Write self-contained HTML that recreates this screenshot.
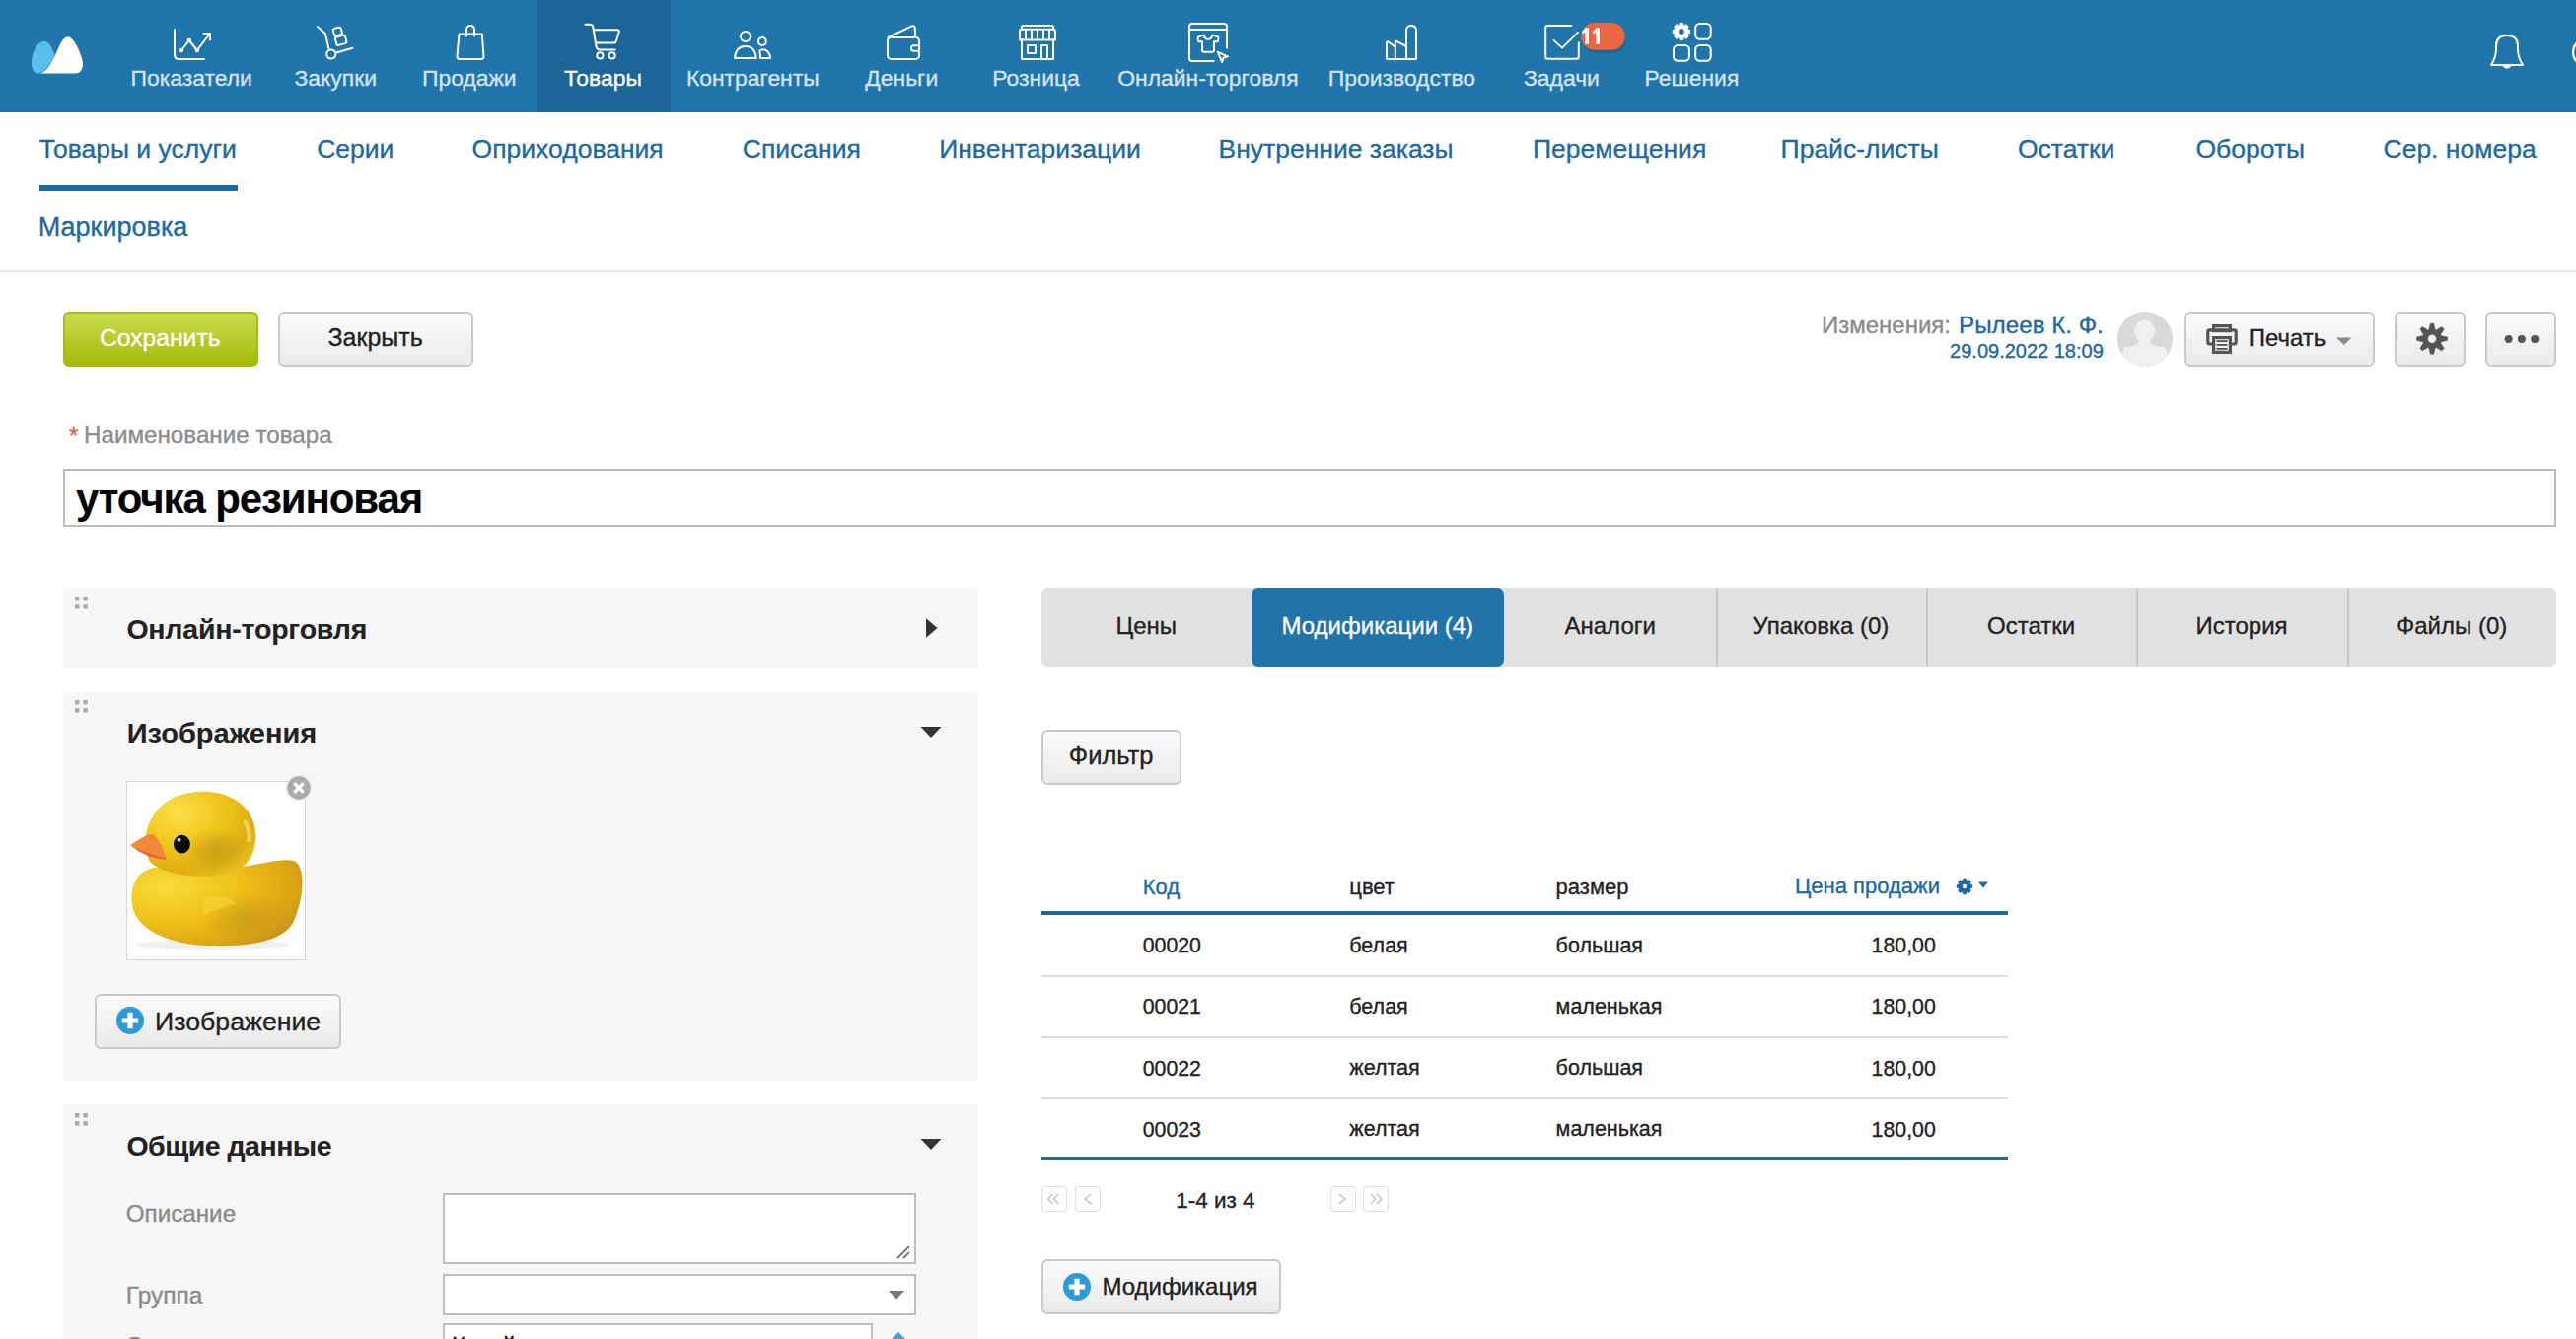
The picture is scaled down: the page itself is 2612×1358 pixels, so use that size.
<!DOCTYPE html>
<html><head><meta charset="utf-8"><style>
html,body{margin:0;padding:0;}
body{width:2612px;height:1358px;overflow:hidden;position:relative;background:#fff;font-family:"Liberation Sans",sans-serif;}
.t{position:absolute;white-space:nowrap;line-height:1;font-family:"Liberation Sans",sans-serif;-webkit-text-stroke:0.35px currentColor;}
.r{position:absolute;}
</style></head><body>
<div class="r" style="left:0px;top:0px;width:2612px;height:114px;background:#2075aa;"></div>
<div class="r" style="left:544px;top:0px;width:136px;height:114px;background:#1c6697;border-radius:3px 3px 0 0;"></div>
<div class="t" style="left:132.6px;top:67.6px;font-size:22.9px;color:#d3e3ef;">Показатели</div>
<div class="t" style="left:298.5px;top:67.6px;font-size:22.9px;color:#d3e3ef;">Закупки</div>
<div class="t" style="left:428.0px;top:67.6px;font-size:22.9px;color:#d3e3ef;">Продажи</div>
<div class="t" style="left:572.1px;top:67.6px;font-size:22.9px;color:#ffffff;">Товары</div>
<div class="t" style="left:695.9px;top:67.6px;font-size:22.9px;color:#d3e3ef;">Контрагенты</div>
<div class="t" style="left:877.3px;top:67.6px;font-size:22.9px;color:#d3e3ef;">Деньги</div>
<div class="t" style="left:1006.3px;top:67.6px;font-size:22.9px;color:#d3e3ef;">Розница</div>
<div class="t" style="left:1133.3px;top:67.6px;font-size:22.9px;color:#d3e3ef;">Онлайн-торговля</div>
<div class="t" style="left:1346.8px;top:67.6px;font-size:22.9px;color:#d3e3ef;">Производство</div>
<div class="t" style="left:1545.0px;top:67.6px;font-size:22.9px;color:#d3e3ef;">Задачи</div>
<div class="t" style="left:1667.4px;top:67.6px;font-size:22.9px;color:#d3e3ef;">Решения</div>
<svg class="r" style="left:0;top:0" width="2612" height="114" viewBox="0 0 2612 114">
<path d="M39 74.7 C33 74.2 31.6 68 32 62 C32.6 53 38 41.8 44.8 41.8 C50 41.8 53 49 55.6 56 C52 64 47 72.5 39 74.7Z" fill="#5bbdec"/>
<path d="M40.5 74.6 C48 72.5 52 64 56 56 C60 47 63.5 37.2 68.7 37.2 C74 37.2 80 49 83 59 C85.5 68 83 74.6 76 74.6Z" fill="#fff"/>
<g stroke="#fff" stroke-width="2" fill="none" stroke-linecap="round" stroke-linejoin="round">
<path d="M177 30 V55.5 Q177 60 181.5 60 H207"/>
<path d="M184 51 L191.8 41 L199.9 51 L212.5 34.5"/>
<path d="M206.5 34 H213 V40.5"/>
</g>
<g fill="#fff"><circle cx="184" cy="51" r="2.2"/><circle cx="191.8" cy="41" r="2.2"/><circle cx="199.9" cy="51" r="2.2"/></g>
<g stroke="#fff" stroke-width="2" fill="none" stroke-linecap="round" stroke-linejoin="round">
<path d="M322 27 L329.8 33.9 L333.6 50"/>
<circle cx="335.8" cy="55" r="4.6"/>
<path d="M341 53.5 L357.5 48.8"/>
<rect x="337.4" y="29.4" width="8.2" height="7.6" rx="2" transform="rotate(-15 337.4 29.4)"/>
<rect x="339.5" y="38" width="10.4" height="8.6" rx="2" transform="rotate(-15 339.5 38)"/>
</g>
<g stroke="#fff" stroke-width="2" fill="none" stroke-linecap="round" stroke-linejoin="round">
<path d="M465.5 34.5 H488.8 L490.5 57 Q490.7 60 487.7 60 H466.3 Q463.3 60 463.5 57Z"/>
<path d="M473 36.5 V30 Q473 26 477 26 Q481 26 481 30 V36.5"/>
</g>
<g stroke="#fff" stroke-width="2" fill="none" stroke-linecap="round" stroke-linejoin="round">
<path d="M593.5 24.8 H598.5 Q600.8 24.8 601.3 27.5 L604.7 47.8 Q605.3 50.4 608 50.4 H623.8"/>
<path d="M602.4 30.2 H626 Q628.3 30.2 627.7 32.5 L624.6 42.5 Q624.1 43.6 622.8 43.6 H604.5"/>
<circle cx="608.4" cy="56.4" r="3.1"/><circle cx="620.6" cy="56.4" r="3.1"/>
</g>
<g stroke="#fff" stroke-width="2" fill="none" stroke-linecap="round" stroke-linejoin="round">
<circle cx="755.9" cy="36.9" r="5"/>
<path d="M745 59 Q746 47 755.9 47 Q765.8 47 766.8 59Z"/>
<circle cx="772.9" cy="42" r="3.9"/>
<path d="M770.2 51.6 Q772 50.2 773.5 50.2 Q780 50.2 781.2 59 H771 Q771 55 770.2 51.6Z"/>
</g>
<g stroke="#fff" stroke-width="2" fill="none" stroke-linecap="round" stroke-linejoin="round">
<rect x="900" y="38" width="32" height="21.9" rx="3.5"/>
<path d="M900.5 38 L924 26.6 Q927.8 25.3 927.9 29.5 V38"/>
<path d="M932 46.3 H926.6 Q923.9 46.3 923.9 49 Q923.9 51.8 926.6 51.8 H932"/>
</g>
<g stroke="#fff" stroke-width="2" fill="none" stroke-linecap="round" stroke-linejoin="round" stroke-linecap="butt" stroke-linejoin="miter">
<path d="M1036 40 V60 H1068 V40"/>
<path d="M1034 40.5 V32.5 Q1034 30 1036 29.5 V27 Q1036 26 1037 26 H1067 Q1068 26 1068 27 V29.5 Q1070 30 1070 32.5 V40.5 H1034Z"/>
<path d="M1036 28.5 V29.8 H1068 V28.5"/>
<path d="M1040 30 V40 M1046 30 V40 M1052 30 V40 M1058 30 V40 M1064 30 V40"/>
<rect x="1042" y="46" width="8" height="8"/>
<path d="M1056 60 V46 H1062 V60"/>
</g>
<g stroke="#fff" stroke-width="2" fill="none" stroke-linecap="round" stroke-linejoin="round">
<path d="M1230.8 62 H1209 Q1206 62 1206 59 V27 Q1206 24 1209 24 H1241 Q1244 24 1244 27 V48.8"/>
<path d="M1206 30 H1244"/>
<path d="M1220.8 35.6 Q1221.5 39.8 1225 39.8 Q1228.6 39.8 1229.4 35.6 L1234.5 37.2 Q1235.8 37.8 1235.5 39.2 L1234.6 42.2 H1231 V51 Q1231 52.8 1229.3 52.8 H1220.8 Q1219 52.8 1219 51 V42.2 H1215.4 L1214.6 39.2 Q1214.3 37.8 1215.6 37.2Z"/>
<path d="M1234.8 52.8 L1245 57.3 L1240.5 58.8 L1239.2 63Z"/>
</g>
<g stroke="#fff" stroke-width="2" fill="none" stroke-linecap="round" stroke-linejoin="round" stroke-linecap="butt">
<path d="M1436 60 H1406 V43.5 Q1406 41.6 1408 42.8 L1414.8 47.6 V43 Q1414.8 41.2 1416.5 42.2 L1426 47 V31 Q1426 26 1431 26 Q1436 26 1436 31 V60"/>
<path d="M1414.8 47.6 V60 M1426 47 V60"/>
</g>
<g stroke="#fff" stroke-width="2" fill="none" stroke-linecap="round" stroke-linejoin="round">
<path d="M1593.4 26 H1569.2 Q1567.2 26 1567.2 28 V57.7 Q1567.2 59.7 1569.2 59.7 H1598.8 Q1600.8 59.7 1600.8 57.7 V43.2"/>
<path d="M1575.5 40.9 L1584 48.6 L1600 32.8" stroke-width="1.8"/>
</g>
<rect x="1604.3" y="26.5" width="44.4" height="27.8" rx="13.9" fill="#1b5f8e" opacity="0.55"/>
<rect x="1603.3" y="23" width="44.4" height="27.8" rx="13.9" fill="#ec6541"/>
<g stroke="#fff" stroke-width="2" fill="none" stroke-linecap="round" stroke-linejoin="round">
<rect x="1719.2" y="24" width="15.5" height="15.8" rx="4.2"/>
<rect x="1697" y="46.1" width="15.9" height="15.7" rx="4.2"/>
<rect x="1719.2" y="46.1" width="15.5" height="15.7" rx="4.2"/>
</g>
<g stroke="#fff" stroke-width="2" fill="none" stroke-linecap="round" stroke-linejoin="round">
<path d="M2526 66 Q2530.5 59 2531 51 V46.5 Q2531 36 2542 36 Q2553 36 2553 46.5 V51 Q2553.5 59 2558 66 Z"/>
</g>
<path d="M2537 66.5 Q2542 73 2547 66.5Z" fill="#fff"/>
<circle cx="2623" cy="53" r="14" fill="none" stroke="#fff" stroke-width="2.2"/>
</svg>
<svg class="r" style="left:0;top:0;overflow:visible" width="1" height="1"><path d="M1702.22 25.53 L1702.60 25.39 L1703.20 23.16 L1706.60 23.16 L1707.20 25.39 L1707.58 25.53 L1707.95 25.70 L1709.95 24.55 L1712.35 26.95 L1711.20 28.95 L1711.37 29.32 L1711.51 29.70 L1713.74 30.30 L1713.74 33.70 L1711.51 34.30 L1711.37 34.68 L1711.20 35.05 L1712.35 37.05 L1709.95 39.45 L1707.95 38.30 L1707.58 38.47 L1707.20 38.61 L1706.60 40.84 L1703.20 40.84 L1702.60 38.61 L1702.22 38.47 L1701.85 38.30 L1699.85 39.45 L1697.45 37.05 L1698.60 35.05 L1698.43 34.68 L1698.29 34.30 L1696.06 33.70 L1696.06 30.30 L1698.29 29.70 L1698.43 29.32 L1698.60 28.95 L1697.45 26.95 L1699.85 24.55 L1701.85 25.70Z" fill="#fff" stroke="#fff" stroke-width="0.6" stroke-linejoin="round"/><circle cx="1704.9" cy="32" r="2.9" fill="#2075aa"/></svg>
<svg class="r" style="left:0;top:0;overflow:visible" width="1" height="1"><path d="M1607.4 28.2 H1611 V44.8 H1607.4 V32.6 Q1606 33.9 1604.3 34.4 V31.4 Q1606.6 30.5 1607.4 28.2Z M1618.4 28.2 H1622 V44.8 H1618.4 V32.6 Q1617 33.9 1615.3 34.4 V31.4 Q1617.6 30.5 1618.4 28.2Z" fill="#fff"/></svg>
<div class="t" style="left:39.8px;top:137.8px;font-size:26.5px;color:#1a69a0;">Товары и услуги</div>
<div class="t" style="left:321.2px;top:137.8px;font-size:26.5px;color:#1a69a0;">Серии</div>
<div class="t" style="left:478.6px;top:137.8px;font-size:26.5px;color:#1a69a0;">Оприходования</div>
<div class="t" style="left:752.8px;top:137.8px;font-size:26.5px;color:#1a69a0;">Списания</div>
<div class="t" style="left:952.2px;top:137.8px;font-size:26.5px;color:#1a69a0;">Инвентаризации</div>
<div class="t" style="left:1235.5px;top:137.8px;font-size:26.5px;color:#1a69a0;">Внутренние заказы</div>
<div class="t" style="left:1554.0px;top:137.8px;font-size:26.5px;color:#1a69a0;">Перемещения</div>
<div class="t" style="left:1805.6px;top:137.8px;font-size:26.5px;color:#1a69a0;">Прайс-листы</div>
<div class="t" style="left:2046.0px;top:137.8px;font-size:26.5px;color:#1a69a0;">Остатки</div>
<div class="t" style="left:2226.5px;top:137.8px;font-size:26.5px;color:#1a69a0;">Обороты</div>
<div class="t" style="left:2416.5px;top:137.8px;font-size:26.5px;color:#1a69a0;">Сер. номера</div>
<div class="r" style="left:40px;top:188px;width:201px;height:6px;background:#1b6aa1;"></div>
<div class="t" style="left:38.8px;top:217.3px;font-size:27px;color:#1a69a0;">Маркировка</div>
<div class="r" style="left:0px;top:274px;width:2612px;height:2px;background:#e6e6e6;"></div>
<div class="r" style="left:64px;top:316px;width:198px;height:56px;background:linear-gradient(#c8dd4e,#a3ba0c);border:2px solid #a5bc0f;border-radius:6px;box-sizing:border-box;"></div>
<div class="t" style="left:100.9px;top:330.7px;font-size:24.7px;color:#fff;">Сохранить</div>
<div class="r" style="left:282px;top:316px;width:198px;height:56px;background:linear-gradient(#fbfbfb,#e9e9e9);border:2px solid #c9c9c9;border-radius:6px;box-sizing:border-box;"></div>
<div class="t" style="left:332.5px;top:330.4px;font-size:25px;color:#222;">Закрыть</div>
<div class="t" style="left:1986.1px;top:317.5px;font-size:24.2px;color:#1a69a0;">Рылеев К. Ф.</div>
<div class="t" style="left:1847.0px;top:317.7px;font-size:24px;color:#8a8a8a;">Изменения:</div>
<div class="t" style="left:1977.1px;top:346.3px;font-size:20px;color:#1a69a0;">29.09.2022 18:09</div>
<svg class="r" style="left:2147px;top:316px" width="56" height="56" viewBox="0 0 56 56">
<circle cx="28" cy="28" r="28" fill="#d9d9d9"/>
<clipPath id="avc"><circle cx="28" cy="28" r="28"/></clipPath>
<g clip-path="url(#avc)" fill="#efefef">
<ellipse cx="27.5" cy="19.8" rx="10.5" ry="11.3"/>
<path d="M21.8 27 V31 Q20.5 35 6.6 36.5 L0 60 H56 L48.4 36.5 Q34.5 35 33.3 31 V27Z"/>
</g></svg>
<div class="r" style="left:2215px;top:316px;width:193px;height:56px;background:linear-gradient(#fbfbfb,#e9e9e9);border:2px solid #c9c9c9;border-radius:6px;box-sizing:border-box;"></div>
<svg class="r" style="left:2230px;top:322px" width="50" height="44" viewBox="0 0 50 44">
<g fill="none" stroke="#555" stroke-width="3.2">
<rect x="14.6" y="8.6" width="16.8" height="5" />
<path d="M16 27 H10.5 Q8.8 27 8.8 25.3 V14.5 Q8.8 12.8 10.5 12.8 H35.5 Q37.2 12.8 37.2 14.5 V25.3 Q37.2 27 35.5 27 H30"/>
<rect x="14.6" y="20.6" width="16.8" height="14.8"/>
</g>
<g fill="#555"><rect x="17.5" y="23.2" width="11" height="1.8"/><rect x="17.5" y="27" width="11" height="1.8"/><rect x="17.5" y="31" width="11" height="1.8"/></g>
</svg>
<div class="t" style="left:2279.7px;top:331.2px;font-size:24px;color:#222;">Печать</div>
<svg class="r" style="left:2368px;top:341px" width="18" height="10" viewBox="0 0 18 10"><path d="M1 1.5 H16.5 L8.75 9Z" fill="#8a8a8a"/></svg>
<div class="r" style="left:2428px;top:316px;width:72px;height:56px;background:linear-gradient(#fbfbfb,#e9e9e9);border:2px solid #c9c9c9;border-radius:6px;box-sizing:border-box;"></div>
<svg class="r" style="left:0;top:0;overflow:visible" width="1" height="1"><path d="M2462.33 334.83 L2462.75 334.67 L2464.40 328.18 L2467.60 328.18 L2469.25 334.67 L2469.67 334.83 L2470.09 335.01 L2475.84 331.60 L2478.10 333.86 L2474.69 339.61 L2474.87 340.03 L2475.03 340.45 L2481.52 342.10 L2481.52 345.30 L2475.03 346.95 L2474.87 347.37 L2474.69 347.79 L2478.10 353.54 L2475.84 355.80 L2470.09 352.39 L2469.67 352.57 L2469.25 352.73 L2467.60 359.22 L2464.40 359.22 L2462.75 352.73 L2462.33 352.57 L2461.91 352.39 L2456.16 355.80 L2453.90 353.54 L2457.31 347.79 L2457.13 347.37 L2456.97 346.95 L2450.48 345.30 L2450.48 342.10 L2456.97 340.45 L2457.13 340.03 L2457.31 339.61 L2453.90 333.86 L2456.16 331.60 L2461.91 335.01Z" fill="#555" stroke="#555" stroke-width="0.6" stroke-linejoin="round"/><circle cx="2466" cy="343.7" r="4.2" fill="#eeeeee"/></svg>
<div class="r" style="left:2520px;top:316px;width:72px;height:56px;background:linear-gradient(#fbfbfb,#e9e9e9);border:2px solid #c9c9c9;border-radius:6px;box-sizing:border-box;"></div>
<svg class="r" style="left:2535px;top:334px" width="44" height="20" viewBox="0 0 44 20"><g fill="#555"><circle cx="8.6" cy="10" r="4"/><circle cx="21.9" cy="10" r="4"/><circle cx="35.2" cy="10" r="4"/></g></svg>
<div class="t" style="left:70.0px;top:429.5px;font-size:24px;color:#e8603c;">*</div>
<div class="t" style="left:85.0px;top:429.3px;font-size:24.2px;color:#8c8c8c;">Наименование товара</div>
<div class="r" style="left:64px;top:476px;width:2528px;height:58px;background:#fff;border:2px solid #bdbdbd;box-sizing:border-box;"></div>
<div class="t" style="left:77.0px;top:484.8px;font-size:42px;color:#000; font-weight:bold;-webkit-text-stroke:0.1px currentColor; letter-spacing:-1.1px;">уточка резиновая</div>
<div class="r" style="left:64px;top:596px;width:928px;height:82px;background:#f6f6f6;border-radius:4px;"></div>
<svg class="r" style="left:76px;top:605px" width="14" height="14" viewBox="0 0 14 14"><g fill="#a9a9a9"><rect x="0" y="0" width="4.4" height="4.4"/><rect x="8.4" y="0" width="4.4" height="4.4"/><rect x="0" y="8.2" width="4.4" height="4.4"/><rect x="8.4" y="8.2" width="4.4" height="4.4"/></g></svg>
<div class="t" style="left:128.4px;top:624.2px;font-size:28.5px;color:#222; font-weight:bold;-webkit-text-stroke:0.1px currentColor; letter-spacing:-0.2px;">Онлайн-торговля</div>
<svg class="r" style="left:936px;top:624.5px" width="16" height="24" viewBox="0 0 16 24"><path d="M3 2.2 V21.8 L14.5 12Z" fill="#333"/></svg>
<div class="r" style="left:64px;top:702px;width:928px;height:394px;background:#f6f6f6;border-radius:4px;"></div>
<svg class="r" style="left:76px;top:710px" width="14" height="14" viewBox="0 0 14 14"><g fill="#a9a9a9"><rect x="0" y="0" width="4.4" height="4.4"/><rect x="8.4" y="0" width="4.4" height="4.4"/><rect x="0" y="8.2" width="4.4" height="4.4"/><rect x="8.4" y="8.2" width="4.4" height="4.4"/></g></svg>
<div class="t" style="left:128.7px;top:729.7px;font-size:29px;color:#222; font-weight:bold;-webkit-text-stroke:0.1px currentColor;">Изображения</div>
<svg class="r" style="left:932px;top:734.5px" width="24" height="16" viewBox="0 0 24 16"><path d="M1.5 2 H22.5 L12 13Z" fill="#333"/></svg>
<div class="r" style="left:128px;top:792px;width:182px;height:182px;background:#fff;border:1.5px solid #d6d6d6;box-sizing:border-box;"></div>
<svg class="r" style="left:129px;top:793px" width="180" height="180" viewBox="1 1 180 180">
<defs>
<radialGradient id="hg" cx="0.3" cy="0.25" r="0.85"><stop offset="0" stop-color="#fbe04a"/><stop offset="0.45" stop-color="#f1c61a"/><stop offset="0.8" stop-color="#dfae12"/><stop offset="1" stop-color="#e8bd1c"/></radialGradient>
<radialGradient id="bg" cx="0.2" cy="0.3" r="0.95"><stop offset="0" stop-color="#f9db3a"/><stop offset="0.45" stop-color="#eec116"/><stop offset="0.8" stop-color="#d9a514"/><stop offset="1" stop-color="#c08a1e"/></radialGradient>
<radialGradient id="sh" cx="0.5" cy="0.5" r="0.5"><stop offset="0" stop-color="#c8961a" stop-opacity="0.75"/><stop offset="1" stop-color="#c8961a" stop-opacity="0"/></radialGradient>
</defs>
<ellipse cx="88" cy="166" rx="78" ry="5" fill="#f1f0ee"/>
<path d="M5.4 122 C5 102 13 91 28 88 L118 87 C138 84 158 78 170 81 C182 86 181 118 169 144 C157 164 122 168 84 167 C42 166 7 150 5.4 122Z" fill="url(#bg)"/>
<ellipse cx="125" cy="140" rx="50" ry="26" fill="url(#sh)"/>
<path d="M24 82 C13 62 21 29 50 16 C80 4 119 12 129 42 C136 63 127 84 111 92 C81 101 40 97 24 82Z" fill="url(#hg)"/>
<ellipse cx="90" cy="70" rx="32" ry="22" fill="url(#sh)"/>
<path d="M80 118 C92 115 105 118 112 124 C100 128 88 132 80 136 C77 130 77 122 80 118Z" fill="#f6d43a" opacity="0.6"/>
<path d="M4 65 C12 60 20 54.5 27 53.7 C33 58 38 69 40.5 78 C30 78.5 15 73 4 65Z" fill="#ef8a38"/>
<path d="M6 66.5 C17 72 30 76 40.5 78 L40 79.5 C28 79 15 74 6 66.5Z" fill="#e8603c"/>
<ellipse cx="56.4" cy="64.2" rx="8.4" ry="9.4" fill="#0d0d0d"/>
<circle cx="53.5" cy="59.8" r="2" fill="#dcdcdc"/>
<path d="M120 40 C124 48 126 55 124 62" stroke="#f7e27a" stroke-width="4" fill="none" opacity="0.7"/>
</svg>
<svg class="r" style="left:289px;top:785px" width="28" height="28" viewBox="0 0 28 28"><circle cx="14" cy="14" r="12.5" fill="#ababab" stroke="#f0f0f0" stroke-width="1.5"/><path d="M9.3 9.3 L18.7 18.7 M18.7 9.3 L9.3 18.7" stroke="#fff" stroke-width="3.6"/></svg>
<div class="r" style="left:96px;top:1008px;width:250px;height:56px;background:linear-gradient(#fbfbfb,#e9e9e9);border:2px solid #c9c9c9;border-radius:6px;box-sizing:border-box;"></div>
<svg class="r" style="left:117px;top:1020px" width="30" height="30" viewBox="0 0 30 30"><circle cx="15" cy="15" r="14" fill="#2b9bd9"/><path d="M15 6.8 V23.2 M6.8 15 H23.2" stroke="#fff" stroke-width="5.2"/></svg>
<div class="t" style="left:157.1px;top:1022.9px;font-size:26.7px;color:#222;">Изображение</div>
<div class="r" style="left:64px;top:1120px;width:928px;height:280px;background:#f6f6f6;border-radius:4px;"></div>
<svg class="r" style="left:76px;top:1129px" width="14" height="14" viewBox="0 0 14 14"><g fill="#a9a9a9"><rect x="0" y="0" width="4.4" height="4.4"/><rect x="8.4" y="0" width="4.4" height="4.4"/><rect x="0" y="8.2" width="4.4" height="4.4"/><rect x="8.4" y="8.2" width="4.4" height="4.4"/></g></svg>
<div class="t" style="left:128.4px;top:1148.2px;font-size:28.5px;color:#222; font-weight:bold;-webkit-text-stroke:0.1px currentColor; letter-spacing:-0.5px;">Общие данные</div>
<svg class="r" style="left:932px;top:1153px" width="24" height="16" viewBox="0 0 24 16"><path d="M1.5 2 H22.5 L12 13Z" fill="#333"/></svg>
<div class="t" style="left:127.8px;top:1219.2px;font-size:24.2px;color:#8a8a8a;">Описание</div>
<div class="t" style="left:127.8px;top:1301.5px;font-size:24.5px;color:#8a8a8a;">Группа</div>
<div class="t" style="left:127.8px;top:1354.1px;font-size:23.5px;color:#8a8a8a;">Страна</div>
<div class="r" style="left:449px;top:1210px;width:480px;height:72px;background:#fff;border:2px solid #bdbdbd;box-sizing:border-box;"></div>
<svg class="r" style="left:908px;top:1262px" width="16" height="16" viewBox="0 0 16 16"><path d="M2 14 L14 2 M8 14 L14 8" stroke="#555" stroke-width="1.5"/></svg>
<div class="r" style="left:449px;top:1292px;width:480px;height:42px;background:#fff;border:2px solid #bdbdbd;box-sizing:border-box;"></div>
<svg class="r" style="left:900px;top:1308px" width="18" height="10" viewBox="0 0 18 10"><path d="M1 1 H17 L9 9.5Z" fill="#777"/></svg>
<div class="r" style="left:449px;top:1342px;width:436px;height:58px;background:#fff;border:2px solid #bdbdbd;box-sizing:border-box;"></div>
<div class="t" style="left:458.0px;top:1352.7px;font-size:24px;color:#111;">Китай</div>
<div class="t" style="left:832.0px;top:1351.0px;font-size:26px;color:#aaa;">×</div>
<svg class="r" style="left:898px;top:1349px" width="26" height="20" viewBox="0 0 26 20"><path d="M13 2 L21 10 L13 18 L5 10Z" fill="#3aa3dc"/></svg>
<div class="r" style="left:1056px;top:596px;width:1536px;height:80px;background:#e1e1e1;border-radius:7px;"></div>
<div class="r" style="left:1269px;top:596px;width:256px;height:80px;background:#2074aa;border-radius:7px;"></div>
<div class="r" style="left:1740px;top:596px;width:2px;height:80px;background:#c9c9c9;"></div>
<div class="r" style="left:1953px;top:596px;width:2px;height:80px;background:#c9c9c9;"></div>
<div class="r" style="left:2166px;top:596px;width:2px;height:80px;background:#c9c9c9;"></div>
<div class="r" style="left:2380px;top:596px;width:2px;height:80px;background:#c9c9c9;"></div>
<div class="t" style="left:1131.5px;top:623.3px;font-size:24px;color:#222;">Цены</div>
<div class="t" style="left:1299.5px;top:623.3px;font-size:24px;color:#fff;">Модификации (4)</div>
<div class="t" style="left:1586.5px;top:623.3px;font-size:24px;color:#222;">Аналоги</div>
<div class="t" style="left:1777.5px;top:623.3px;font-size:24px;color:#222;">Упаковка (0)</div>
<div class="t" style="left:2015.0px;top:623.3px;font-size:24px;color:#222;">Остатки</div>
<div class="t" style="left:2226.5px;top:623.3px;font-size:24px;color:#222;">История</div>
<div class="t" style="left:2430.0px;top:623.3px;font-size:24px;color:#222;">Файлы (0)</div>
<div class="r" style="left:1056px;top:740px;width:142px;height:56px;background:linear-gradient(#fbfbfb,#e9e9e9);border:2px solid #c9c9c9;border-radius:6px;box-sizing:border-box;"></div>
<div class="t" style="left:1083.8px;top:754.2px;font-size:25.5px;color:#222;">Фильтр</div>
<div class="t" style="left:1158.7px;top:888.7px;font-size:22px;color:#1a69a0;">Код</div>
<div class="t" style="left:1368.3px;top:888.7px;font-size:22px;color:#222;">цвет</div>
<div class="t" style="left:1577.6px;top:888.7px;font-size:22px;color:#222;">размер</div>
<div class="t" style="left:1820.0px;top:888.4px;font-size:22px;color:#1a69a0;">Цена продажи</div>
<svg class="r" style="left:1982px;top:889px" width="36" height="20" viewBox="0 0 36 20"><path d="M24 5.5 H34 L29 11.5Z" fill="#1a69a0"/></svg>
<div class="r" style="left:1056px;top:924px;width:980px;height:4px;background:#1b6aa1;"></div>
<div class="t" style="left:1158.7px;top:949.0px;font-size:21.3px;color:#222;">00020</div>
<div class="t" style="left:1368.3px;top:948.8px;font-size:21.5px;color:#222;">белая</div>
<div class="t" style="left:1577.6px;top:948.8px;font-size:21.5px;color:#222;">большая</div>
<div class="t" style="left:1897.6px;top:949.0px;font-size:21.3px;color:#222;">180,00</div>
<div class="t" style="left:1158.7px;top:1011.0px;font-size:21.3px;color:#222;">00021</div>
<div class="t" style="left:1368.3px;top:1010.8px;font-size:21.5px;color:#222;">белая</div>
<div class="t" style="left:1577.6px;top:1010.8px;font-size:21.5px;color:#222;">маленькая</div>
<div class="t" style="left:1897.6px;top:1011.0px;font-size:21.3px;color:#222;">180,00</div>
<div class="t" style="left:1158.7px;top:1073.5px;font-size:21.3px;color:#222;">00022</div>
<div class="t" style="left:1368.3px;top:1073.3px;font-size:21.5px;color:#222;">желтая</div>
<div class="t" style="left:1577.6px;top:1073.3px;font-size:21.5px;color:#222;">большая</div>
<div class="t" style="left:1897.6px;top:1073.5px;font-size:21.3px;color:#222;">180,00</div>
<div class="t" style="left:1158.7px;top:1135.5px;font-size:21.3px;color:#222;">00023</div>
<div class="t" style="left:1368.3px;top:1135.3px;font-size:21.5px;color:#222;">желтая</div>
<div class="t" style="left:1577.6px;top:1135.3px;font-size:21.5px;color:#222;">маленькая</div>
<div class="t" style="left:1897.6px;top:1135.5px;font-size:21.3px;color:#222;">180,00</div>
<div class="r" style="left:1056px;top:988.5px;width:980px;height:2.0px;background:#dcdcdc;"></div>
<div class="r" style="left:1056px;top:1050.5px;width:980px;height:2.0px;background:#dcdcdc;"></div>
<div class="r" style="left:1056px;top:1112.5px;width:980px;height:2.0px;background:#dcdcdc;"></div>
<div class="r" style="left:1056px;top:1173px;width:980px;height:3px;background:#1b6aa1;"></div>
<div class="r" style="left:1056px;top:1203px;width:26px;height:26px;border:1.5px solid #dedede;border-radius:3px;box-sizing:border-box;background:#fff;"></div>
<div class="r" style="left:1090.2px;top:1203px;width:26.0px;height:26px;border:1.5px solid #dedede;border-radius:3px;box-sizing:border-box;background:#fff;"></div>
<div class="r" style="left:1348.5px;top:1203px;width:26.0px;height:26px;border:1.5px solid #dedede;border-radius:3px;box-sizing:border-box;background:#fff;"></div>
<div class="r" style="left:1382.2px;top:1203px;width:26.0px;height:26px;border:1.5px solid #dedede;border-radius:3px;box-sizing:border-box;background:#fff;"></div>
<svg class="r" style="left:0;top:0;overflow:visible" width="1" height="1">
<g fill="none" stroke="#c8c8c8" stroke-width="1.6">
<path d="M1067.5 1210.8 L1062.6 1215.9 L1067.5 1221 M1073.4 1210.8 L1068.5 1215.9 L1073.4 1221"/>
<path d="M1106.5 1210.8 L1100 1215.9 L1106.5 1221"/>
<path d="M1357.6 1210.8 L1364.2 1215.9 L1357.6 1221"/>
<path d="M1390 1210.8 L1394.9 1215.9 L1390 1221 M1395.9 1210.8 L1400.8 1215.9 L1395.9 1221"/>
</g></svg>
<div class="t" style="left:1192.2px;top:1206.9px;font-size:22.5px;color:#222;">1-4 из 4</div>
<div class="r" style="left:1056px;top:1277px;width:243px;height:56px;background:linear-gradient(#fbfbfb,#e9e9e9);border:2px solid #c9c9c9;border-radius:6px;box-sizing:border-box;"></div>
<svg class="r" style="left:1077px;top:1290px" width="30" height="30" viewBox="0 0 30 30"><circle cx="15" cy="15" r="14" fill="#2b9bd9"/><path d="M15 6.8 V23.2 M6.8 15 H23.2" stroke="#fff" stroke-width="5.2"/></svg>
<div class="t" style="left:1117.4px;top:1292.6px;font-size:24px;color:#222;">Модификация</div>
<svg class="r" style="left:0;top:0;overflow:visible" width="1" height="1"><path d="M1989.63 893.27 L1990.00 893.13 L1990.60 891.12 L1993.40 891.12 L1994.00 893.13 L1994.37 893.27 L1994.74 893.44 L1996.58 892.44 L1998.56 894.42 L1997.56 896.26 L1997.73 896.63 L1997.87 897.00 L1999.88 897.60 L1999.88 900.40 L1997.87 901.00 L1997.73 901.37 L1997.56 901.74 L1998.56 903.58 L1996.58 905.56 L1994.74 904.56 L1994.37 904.73 L1994.00 904.87 L1993.40 906.88 L1990.60 906.88 L1990.00 904.87 L1989.63 904.73 L1989.26 904.56 L1987.42 905.56 L1985.44 903.58 L1986.44 901.74 L1986.27 901.37 L1986.13 901.00 L1984.12 900.40 L1984.12 897.60 L1986.13 897.00 L1986.27 896.63 L1986.44 896.26 L1985.44 894.42 L1987.42 892.44 L1989.26 893.44Z" fill="#1a69a0" stroke="#1a69a0" stroke-width="0.6" stroke-linejoin="round"/><circle cx="1992" cy="899" r="2.2" fill="#ffffff"/></svg>
</body></html>
